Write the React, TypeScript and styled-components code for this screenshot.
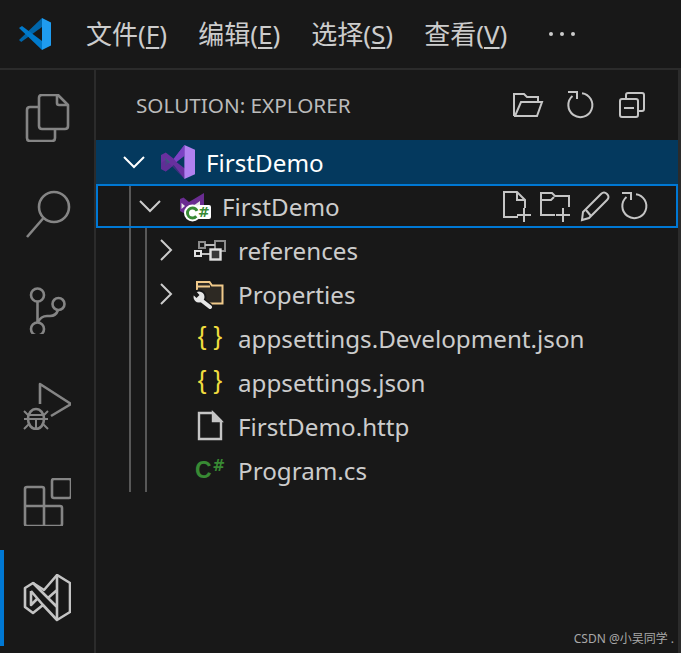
import styled, { createGlobalStyle } from "styled-components";

const GlobalStyle = createGlobalStyle`
  html, body {
    margin: 0;
    padding: 0;
    background: #181818;
  }
  * {
    box-sizing: border-box;
  }
`;

const FONT = `"Noto Sans", "Noto Sans CJK SC", sans-serif`;
const GUIDE = "#585858";

const Page = styled.div`
  position: relative;
  width: 681px;
  height: 653px;
  display: flex;
  flex-direction: column;
  overflow: hidden;
  background: #181818;
  color: #cccccc;
  font-family: ${FONT};
`;

const TitleBar = styled.header`
  height: 70px;
  flex: none;
  display: flex;
  align-items: center;
  padding: 0 0 0 19px;
  border-bottom: 2px solid #2b2b2b;
`;

const MenuList = styled.nav`
  display: flex;
  align-items: center;
  margin-left: 35px;
  gap: 31px;
`;

const MenuItem = styled.span`
  font-size: 26px;
  line-height: 34px;
  color: #cccccc;
  white-space: nowrap;
  u {
    text-underline-offset: 3px;
    text-decoration-thickness: 2px;
  }
`;

const MenuMore = styled.span`
  display: flex;
  gap: 7px;
  margin-left: 11px;
  i {
    display: block;
    width: 4px;
    height: 4px;
    border-radius: 50%;
    background: #cccccc;
  }
`;

const Body = styled.div`
  flex: 1;
  display: flex;
  min-height: 0;
`;

const ActivityBar = styled.aside`
  width: 96px;
  flex: none;
  border-right: 2px solid #2b2b2b;
`;

const ActivityItem = styled.div<{ $active?: boolean }>`
  position: relative;
  height: 96px;
  display: flex;
  align-items: center;
  justify-content: center;
  &::before {
    content: "";
    display: ${(p) => (p.$active ? "block" : "none")};
    position: absolute;
    left: 0;
    top: 0;
    bottom: 0;
    width: 4px;
    background: #0078d4;
  }
`;

const ActivityIcon = styled.svg<{ $active?: boolean }>`
  width: 48px;
  height: 48px;
  fill: none;
  stroke: ${(p) => (p.$active ? "#c4c4c4" : "#858585")};
  stroke-width: 2.6;
  stroke-linejoin: round;
`;

const SideBar = styled.section`
  flex: 1;
  min-width: 0;
  border-right: 3px solid #2b2b2b;
`;

const SideHeader = styled.div`
  height: 70px;
  display: flex;
  align-items: center;
  justify-content: space-between;
  padding: 0 30px 0 40px;
`;

const SideTitle = styled.h2`
  margin: 0;
  font-size: 20.7px;
  font-weight: 400;
  color: #bbbbbb;
  white-space: nowrap;
`;

const ActionGroup = styled.div<{ $gap: number }>`
  display: flex;
  align-items: center;
  gap: ${(p) => p.$gap}px;
`;

const ActionIcon = styled.svg`
  width: 32px;
  height: 32px;
  flex: none;
  fill: none;
  stroke: #c5c5c5;
  stroke-width: 2;
`;

const Tree = styled.div`
  display: flex;
  flex-direction: column;
`;

const Row = styled.div<{ $selected?: boolean; $focused?: boolean }>`
  height: 44px;
  display: flex;
  align-items: center;
  padding-left: 22px;
  background: ${(p) => (p.$selected ? "#04395e" : "transparent")};
  outline: ${(p) => (p.$focused ? "2px solid #0078d4" : "none")};
  outline-offset: -2px;
  color: ${(p) => (p.$selected ? "#ffffff" : "#cccccc")};
`;

const Guide = styled.span`
  width: 16px;
  height: 100%;
  flex: none;
  background: linear-gradient(${GUIDE}, ${GUIDE}) no-repeat 11px 0 / 2px 100%;
`;

const Twistie = styled.span`
  width: 32px;
  height: 32px;
  flex: none;
  display: flex;
  align-items: center;
  justify-content: center;
`;

const Chevron = styled.svg`
  width: 24px;
  height: 24px;
  fill: none;
  stroke: currentColor;
  stroke-width: 2;
`;

const IconSlot = styled.span`
  width: 56px;
  height: 44px;
  flex: none;
  display: flex;
  align-items: center;
  justify-content: center;
`;

const Label = styled.span`
  flex: 1;
  font-size: 24.2px;
  height: 44px;
  padding-top: 2px;
  line-height: 42px;
  white-space: nowrap;
`;

const RowActions = styled(ActionGroup)`
  padding-right: 28px;
`;

const Braces = styled.span`
  font-family: "Liberation Sans", sans-serif;
  font-size: 26px;
  line-height: 26px;
  color: #f1dd3f;
  white-space: pre;
  transform: translateY(-2px);
`;

const CsGlyph = styled.span`
  display: flex;
  align-items: flex-start;
  height: 20px;
  color: #388a34;
  font-family: "Liberation Sans", sans-serif;
  font-weight: 700;
  font-size: 23px;
  line-height: 20px;
  small {
    font-family: "DejaVu Sans", sans-serif;
    font-size: 15px;
    line-height: 13px;
    margin-left: 1px;
  }
`;

const Watermark = styled.span`
  position: absolute;
  right: 7px;
  bottom: 6px;
  font-size: 12px;
  line-height: 16px;
  color: #a8a8a8;
  white-space: nowrap;
`;

function VsCodeLogo() {
  return (
    <svg width="32" height="32" viewBox="0 0 32 32">
      <path d="M0 22 L2.2 24 L23 9 V0 Z" fill="#0065a9" />
      <path d="M0 10 L3 8 L23 23 V32 Z" fill="#007acc" />
      <path d="M23 0 L32 4.5 V27.5 L23 32 Z" fill="#1f9cf0" />
    </svg>
  );
}

function SolutionLogo() {
  return (
    <svg width="34" height="34" viewBox="0 0 32 32">
      <path d="M0 9.5 L4.5 7 L12 13 L22 0 L23 9.5 L14.5 16 L23 22.5 L22 32 L12 19 L4.5 25 L0 22.5 Z" fill="#68309e" />
      <path d="M4 12 V20 L8.5 16 Z" fill="#3c5a80" />
      <path d="M22 0 L32 4.5 V27.5 L22 32 Z" fill="#b180f0" />
      <path d="M22 0 L12 13 L14.5 16 L22 10 Z" fill="#7b42c4" />
      <path d="M22 32 L4.5 14 L0 17 V22.5 L4.5 25 L12 19 Z" fill="#5c2d91" opacity="0.6" />
    </svg>
  );
}

function ProjectLogo() {
  return (
    <svg width="36" height="32" viewBox="0 0 36 32">
      <path d="M4 9 L7.5 7.5 L13 12 L28 3 V24 L18 24 L13 19 L7.5 23 L4 21 Z" fill="#6a2c91" />
      <path d="M5.5 13 V19 L9 16 Z" fill="#e8e8e8" />
      <path d="M24 11 L17 16 L24 20 Z" fill="#e8e8e8" />
      <circle cx="16.5" cy="23" r="8.5" fill="#ffffff" />
      <rect x="21" y="15" width="14" height="14" rx="2" fill="#ffffff" />
      <circle cx="16.5" cy="23" r="5" fill="none" stroke="#388a34" strokeWidth="3" strokeDasharray="25 7" strokeDashoffset="-3.5" />
      <text x="22" y="27" fontFamily="DejaVu Sans, sans-serif" fontWeight="700" fontSize="14" fill="#388a34">#</text>
    </svg>
  );
}

function ReferencesIcon() {
  return (
    <svg width="34" height="22" viewBox="0 0 34 22" fill="none" strokeWidth="2">
      <rect x="22" y="2" width="10" height="10" stroke="#8c8c8c" />
      <rect x="6" y="3" width="6" height="6" stroke="#8c8c8c" />
      <path d="M12 6 H22 M8 15 H17" stroke="#bdbdbd" />
      <rect x="2" y="12" width="6" height="5" stroke="#e0e0e0" />
      <rect x="17.5" y="10.5" width="10" height="10" stroke="#e0e0e0" strokeWidth="2.4" fill="#3a3a3a" />
    </svg>
  );
}

function PropertiesIcon() {
  return (
    <svg width="34" height="30" viewBox="0 0 34 30" fill="none">
      <path d="M4 16 V3 H16.5 L19 6.5 H29.5 V24.5 H13" fill="#2d2923" stroke="#f0c98a" strokeWidth="2" />
      <path d="M4 7.5 H17" stroke="#f0c98a" strokeWidth="2" />
      <path d="M8 21 L17 28" stroke="#181818" strokeWidth="7" />
      <circle cx="6" cy="18" r="7.5" fill="#181818" />
      <circle cx="6" cy="18" r="5.5" fill="#e6e6e6" />
      <path d="M8 21 L17 28" stroke="#e6e6e6" strokeWidth="4" strokeLinecap="round" />
      <path d="M1 10 L6.5 16 L3.5 19 L-2 14 Z" fill="#181818" />
    </svg>
  );
}

function FileIcon() {
  return (
    <svg width="28" height="32" viewBox="0 0 28 32" fill="none" stroke="#c5c5c5" strokeWidth="2.4">
      <path d="M3 3 H17 L25 11 V29 H3 Z" />
      <path d="M17 3 V11 H25 L17 3 Z" fill="#c5c5c5" />
    </svg>
  );
}

function RefreshIcon() {
  return (
    <ActionIcon viewBox="0 0 32 32">
      <path d="M18 4.2 A12 12 0 1 1 8.5 7" />
      <path d="M4 3 H13 V10" />
    </ActionIcon>
  );
}

const menus = [
  { label: "文件", key: "F" },
  { label: "编辑", key: "E" },
  { label: "选择", key: "S" },
  { label: "查看", key: "V" },
];

export default function App() {
  return (
    <>
      <GlobalStyle />
      <Page>
        <TitleBar>
          <VsCodeLogo />
          <MenuList>
            {menus.map((menu) => (
              <MenuItem key={menu.key}>
                {menu.label}(<u>{menu.key}</u>)
              </MenuItem>
            ))}
            <MenuMore>
              <i />
              <i />
              <i />
            </MenuMore>
          </MenuList>
        </TitleBar>
        <Body>
          <ActivityBar>
            <ActivityItem>
              <ActivityIcon viewBox="0 0 48 48">
                <path d="M16 4 Q16 1 19 1 H35 L45 11 V32 Q45 35 42 35 H19 Q16 35 16 32 Z" />
                <path d="M34 1 V9 Q34 11 36 11 H45" />
                <path d="M16 13 H7 Q4 13 4 16 V44 Q4 47 7 47 H29 Q32 47 32 44 V35" />
              </ActivityIcon>
            </ActivityItem>
            <ActivityItem>
              <ActivityIcon viewBox="0 0 48 48">
                <circle cx="31" cy="17" r="15" />
                <path d="M20.5 28 L4 47" />
              </ActivityIcon>
            </ActivityItem>
            <ActivityItem>
              <ActivityIcon viewBox="0 0 48 48">
                <circle cx="14.5" cy="9" r="6.5" />
                <circle cx="35.5" cy="18" r="6" />
                <circle cx="14.5" cy="43" r="6.5" />
                <path d="M14.5 15.5 V36.5" />
                <path d="M15 36 Q18 30 24 30 H27 Q33 30 35 24" />
              </ActivityIcon>
            </ActivityItem>
            <ActivityItem>
              <ActivityIcon viewBox="0 0 48 48">
                <path d="M17 22 V2 L48 22 L28 34" />
                <ellipse cx="13" cy="37" rx="8" ry="10" />
                <path d="M5 33 H21 M5 37 H21 M13 37 V47 M5 33 L1 29 M21 33 L25 29 M5 37 H1 M21 37 H25 M6 42 L1 47 M20 42 L25 47" strokeWidth="2" />
              </ActivityIcon>
            </ActivityItem>
            <ActivityItem>
              <ActivityIcon viewBox="0 0 48 48">
                <rect x="29" y="1" width="19" height="19" rx="2" />
                <path d="M21 28 V11 Q21 9 19 9 H4 Q2 9 2 11 V46 Q2 48 4 48 H37 Q39 48 39 46 V30 Q39 28 37 28 H2 M21 28 V48" />
              </ActivityIcon>
            </ActivityItem>
            <ActivityItem $active>
              <ActivityIcon $active viewBox="0 0 48 48">
                <path d="M34 1 L47 9 V38 L34 46 L20 31 L10 39 L2 33 V14 L10 9 L21 16 Z" />
                <path d="M34 1 V46 M10 9 L34 33 M34 16 L25 24 M8 17 L20 31 M8 17 V31 L14 25" />
              </ActivityIcon>
            </ActivityItem>
          </ActivityBar>
          <SideBar>
            <SideHeader>
              <SideTitle>SOLUTION: EXPLORER</SideTitle>
              <ActionGroup $gap={20}>
                <ActionIcon viewBox="0 0 32 32">
                  <path d="M2 27 V5 H12 L15 8 H26 V14" />
                  <path d="M2 27 H25 L30 13 H9 L3 27" />
                </ActionIcon>
                <RefreshIcon />
                <ActionIcon viewBox="0 0 32 32">
                  <path d="M10 10 V6 Q10 4 12 4 H26 Q28 4 28 6 V20 Q28 22 26 22 H22" />
                  <rect x="4" y="10" width="18" height="18" rx="2" />
                  <path d="M8 19 H18" />
                </ActionIcon>
              </ActionGroup>
            </SideHeader>
            <Tree>
              <Row $selected>
                <Twistie>
                  <Chevron viewBox="0 0 24 24">
                    <path d="M2 7 L12 17 L22 7" />
                  </Chevron>
                </Twistie>
                <IconSlot>
                  <SolutionLogo />
                </IconSlot>
                <Label>FirstDemo</Label>
              </Row>
              <Row $focused>
                <Guide />
                <Twistie>
                  <Chevron viewBox="0 0 24 24">
                    <path d="M2 7 L12 17 L22 7" />
                  </Chevron>
                </Twistie>
                <IconSlot>
                  <ProjectLogo />
                </IconSlot>
                <Label>FirstDemo</Label>
                <RowActions $gap={7.5}>
                  <ActionIcon viewBox="0 0 32 32">
                    <path d="M18 27 H4 V2 H17 L25 10 V18" />
                    <path d="M17 2 V10 H25" />
                    <path d="M17 25 H31 M24 18 V32" />
                  </ActionIcon>
                  <ActionIcon viewBox="0 0 32 32">
                    <path d="M16 25 H2 V3 H13 L16 6 H30 V17" />
                    <path d="M2 10 H12 L15 7" />
                    <path d="M17 25 H31 M24 18 V32" />
                  </ActionIcon>
                  <ActionIcon viewBox="0 0 32 32">
                    <path d="M4 22 L22 4 Q25 1 28 4 Q31 7 28 10 L10 28 L3 30 Z" />
                    <path d="M7 20 L12 26" />
                  </ActionIcon>
                  <RefreshIcon />
                </RowActions>
              </Row>
              <Row>
                <Guide />
                <Guide />
                <Twistie>
                  <Chevron viewBox="0 0 24 24">
                    <path d="M7 2 L17 12 L7 22" />
                  </Chevron>
                </Twistie>
                <IconSlot>
                  <ReferencesIcon />
                </IconSlot>
                <Label>references</Label>
              </Row>
              <Row>
                <Guide />
                <Guide />
                <Twistie>
                  <Chevron viewBox="0 0 24 24">
                    <path d="M7 2 L17 12 L7 22" />
                  </Chevron>
                </Twistie>
                <IconSlot>
                  <PropertiesIcon />
                </IconSlot>
                <Label>Properties</Label>
              </Row>
              <Row>
                <Guide />
                <Guide />
                <Twistie />
                <IconSlot>
                  <Braces>{"{ }"}</Braces>
                </IconSlot>
                <Label>appsettings.Development.json</Label>
              </Row>
              <Row>
                <Guide />
                <Guide />
                <Twistie />
                <IconSlot>
                  <Braces>{"{ }"}</Braces>
                </IconSlot>
                <Label>appsettings.json</Label>
              </Row>
              <Row>
                <Guide />
                <Guide />
                <Twistie />
                <IconSlot>
                  <FileIcon />
                </IconSlot>
                <Label>FirstDemo.http</Label>
              </Row>
              <Row>
                <Guide />
                <Guide />
                <Twistie />
                <IconSlot>
                  <CsGlyph>
                    C<small>#</small>
                  </CsGlyph>
                </IconSlot>
                <Label>Program.cs</Label>
              </Row>
            </Tree>
          </SideBar>
        </Body>
        <Watermark>CSDN @小吴同学 .</Watermark>
      </Page>
    </>
  );
}
